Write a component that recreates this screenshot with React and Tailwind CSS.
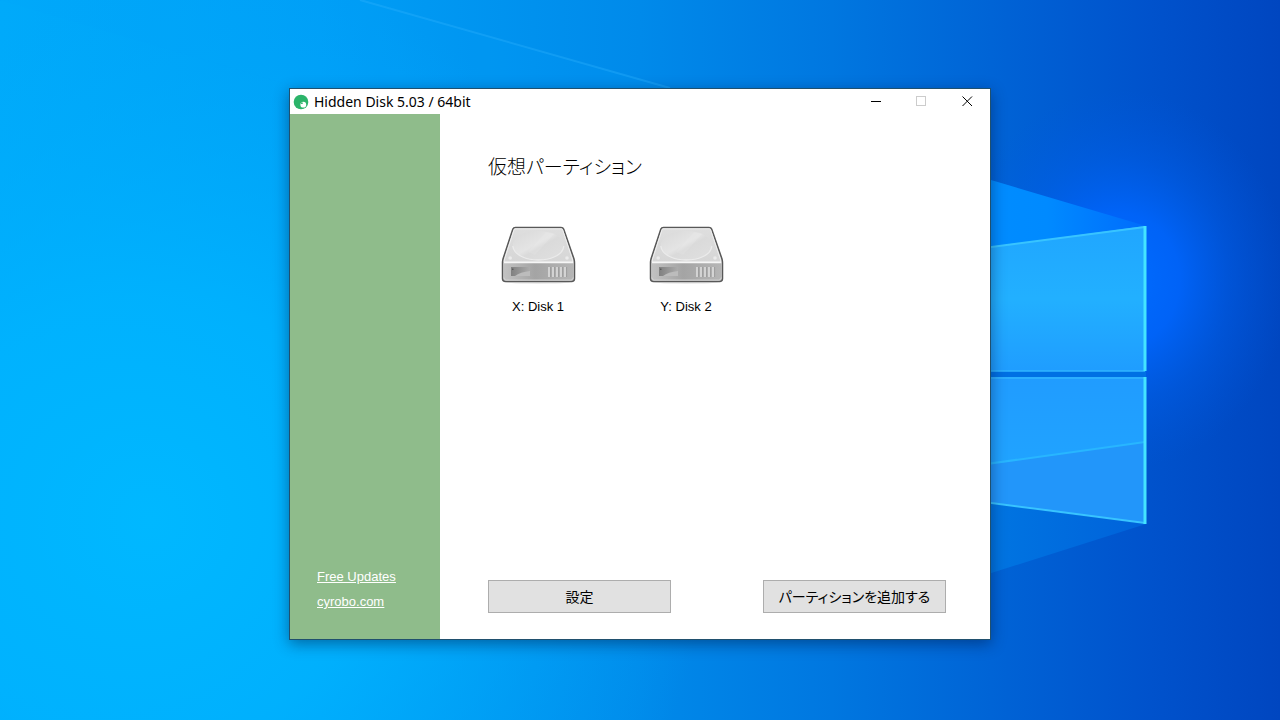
import { useState } from "react";

const disks = [
  { letter: "X", name: "Disk 1" },
  { letter: "Y", name: "Disk 2" },
];

function Wallpaper() {
  return (
    <svg
      className="absolute inset-0 h-full w-full"
      viewBox="0 0 1280 720"
      preserveAspectRatio="xMidYMid slice"
      aria-hidden="true"
    >
      <defs>
        <linearGradient id="sky" x1="0" y1="0" x2="1" y2="0">
          <stop offset="0" stopColor="#00aafa" />
          <stop offset="0.25" stopColor="#009ff6" />
          <stop offset="0.5" stopColor="#008aea" />
          <stop offset="0.65" stopColor="#0077e0" />
          <stop offset="0.8" stopColor="#0060d4" />
          <stop offset="0.9" stopColor="#0052cc" />
          <stop offset="1" stopColor="#0046c0" />
        </linearGradient>
        <radialGradient id="cyan" gradientUnits="userSpaceOnUse" cx="150" cy="520" r="560">
          <stop offset="0" stopColor="#00b8ff" />
          <stop offset="0.4" stopColor="#00b4ff" stopOpacity="0.8" />
          <stop offset="1" stopColor="#00a8fa" stopOpacity="0" />
        </radialGradient>
        <radialGradient
          id="glow"
          gradientUnits="userSpaceOnUse"
          cx="0"
          cy="0"
          r="1"
          gradientTransform="translate(1120 280) scale(170 190)"
        >
          <stop offset="0" stopColor="#006cff" />
          <stop offset="0.35" stopColor="#0066ff" stopOpacity="0.85" />
          <stop offset="0.65" stopColor="#0060f0" stopOpacity="0.4" />
          <stop offset="1" stopColor="#0058e0" stopOpacity="0" />
        </radialGradient>
        <linearGradient id="beamTop" x1="0" y1="0" x2="1" y2="0">
          <stop offset="0" stopColor="#0090ff" />
          <stop offset="0.6" stopColor="#008aff" />
          <stop offset="1" stopColor="#006cfc" />
        </linearGradient>
        <linearGradient id="beamBottom" x1="0" y1="0" x2="1" y2="0">
          <stop offset="0" stopColor="#0080e6" />
          <stop offset="1" stopColor="#0062da" />
        </linearGradient>
        <linearGradient id="paneTop" x1="0" y1="0" x2="0" y2="1">
          <stop offset="0" stopColor="#20a6ff" />
          <stop offset="0.5" stopColor="#22b0ff" />
          <stop offset="1" stopColor="#1f9dff" />
        </linearGradient>
        <linearGradient id="paneBottom" x1="0" y1="0" x2="0" y2="1">
          <stop offset="0" stopColor="#209cff" />
          <stop offset="1" stopColor="#20a4ff" />
        </linearGradient>
      </defs>
      <rect width="1280" height="720" fill="url(#sky)" />
      <rect width="1280" height="720" fill="url(#cyan)" />
      <rect width="1280" height="720" fill="url(#glow)" />

      {/* light beams */}
      <path d="M360 0 L670 88 L300 88 L0 0Z" fill="#00a4ff" opacity="0.12" />
      <path d="M360 0 L670 88" stroke="#30b4ff" strokeWidth="2" opacity="0.35" />
      <path d="M900 153 L1146 226 L900 259Z" fill="url(#beamTop)" />
      <path d="M900 492 L1146 524 L900 602Z" fill="url(#beamBottom)" />

      {/* window panes */}
      <path d="M900 368 H1146 V379 H900Z" fill="#0070e4" />
      <path d="M900 259 L1145 226 V371 H900Z" fill="url(#paneTop)" />
      <path d="M900 377 H1145 V523 L900 491Z" fill="#2296fa" />
      <path d="M900 377 H1145 V442 L900 476Z" fill="url(#paneBottom)" />
      <path d="M900 476 L1145 442" stroke="#28b6ff" strokeWidth="2" />
      <path d="M900 371 H1145 M900 378 H1145" stroke="#30b4ff" strokeWidth="1.5" />
      <path d="M900 259 L1145 227" stroke="#38c4ff" strokeWidth="2" fill="none" />
      <path d="M900 491 L1145 523" stroke="#38c4ff" strokeWidth="2" fill="none" />
      <path d="M1145 226 V371 M1145 377 V524" stroke="#44e4ff" strokeWidth="3" />
    </svg>
  );
}

function AppIcon() {
  return (
    <svg className="h-4 w-4" viewBox="0 0 16 16" aria-hidden="true">
      <circle cx="8" cy="8" r="7.3" fill="#2cb46a" />
      <circle cx="10.3" cy="10.7" r="2.9" fill="#fff" />
      <circle cx="8.9" cy="9.2" r="0.9" fill="#2cb46a" />
    </svg>
  );
}

function DiskIcon() {
  return (
    <svg className="h-[60px] w-[76px]" viewBox="0 0 76 60" aria-hidden="true">
      <defs>
        <linearGradient id="lid" x1="0" y1="0" x2="0" y2="1">
          <stop offset="0" stopColor="#dedede" />
          <stop offset="1" stopColor="#d6d6d6" />
        </linearGradient>
        <linearGradient id="platter" x1="0" y1="0" x2="1" y2="1">
          <stop offset="0" stopColor="#d8d8d8" />
          <stop offset="0.45" stopColor="#e4e4e4" />
          <stop offset="0.55" stopColor="#dadada" />
          <stop offset="1" stopColor="#e0e0e0" />
        </linearGradient>
        <linearGradient id="front" x1="0" y1="0" x2="1" y2="0">
          <stop offset="0" stopColor="#c2c2c2" />
          <stop offset="0.45" stopColor="#a4a4a4" />
          <stop offset="1" stopColor="#b6b6b6" />
        </linearGradient>
        <linearGradient id="slot" x1="0" y1="0" x2="1" y2="0">
          <stop offset="0" stopColor="#808080" />
          <stop offset="1" stopColor="#acacac" />
        </linearGradient>
      </defs>
      <ellipse cx="38" cy="56" rx="32" ry="2" fill="#000" opacity="0.08" />
      <path
        d="M15.5 1.5 H61 Q63 1.5 63.8 3.4 L74 33 Q74.5 35 74.5 37 V52.5 Q74.5 55.5 71.5 55.5 H5.5 Q2.5 55.5 2.5 52.5 V37 Q2.5 35 3 33 L12.7 3.4 Q13.5 1.5 15.5 1.5Z"
        fill="url(#lid)"
        stroke="#585858"
        strokeWidth="1.5"
      />
      <path d="M15 2.8 H61.5 Q62.3 2.8 62.8 4.4 L72.6 34 V36 H4.3 V34 L13.8 4.4 Q14.3 2.8 15 2.8Z" fill="url(#lid)" stroke="#f0f0f0" strokeWidth="0.9" />
      <ellipse cx="38.3" cy="19.5" rx="25.5" ry="14.5" fill="url(#platter)" />
      <path d="M12.8 20 C14 30 28 34 38.3 34 S63 30 63.8 20" fill="none" stroke="#ebebeb" strokeWidth="1.3" />
      <path d="M28 26 L46 6 L54 8 L35 29Z" fill="#fff" opacity="0.1" />
      <circle cx="10.2" cy="32" r="1.8" fill="#ebebeb" />
      <circle cx="67" cy="32" r="1.8" fill="#ebebeb" />
      <path d="M3.6 36.5 H73.4 V51.5 Q73.4 54.3 70.6 54.3 H6.4 Q3.6 54.3 3.6 51.5Z" fill="url(#front)" />
      <path d="M4 51.5 Q4.3 54 6.4 54 H70.6 Q73 54 73.2 51.5" fill="none" stroke="#d4d4d4" strokeWidth="0.8" />
      <path d="M4 36.5 H73.2" stroke="#f6f6f6" strokeWidth="1.4" />
      <rect x="11" y="41" width="19" height="9" fill="url(#slot)" />
      <path d="M15 50 Q20 46 30 45 V50Z" fill="#bcbcbc" />
      <circle cx="12.8" cy="43.2" r="0.8" fill="#505050" />
      <path d="M49 41 V51 M53 41 V51 M57 41 V51 M61 41 V51 M65 41 V51" stroke="#d8d8d8" strokeWidth="1.8" />
      <path d="M50.6 41 V51 M54.6 41 V51 M58.6 41 V51 M62.6 41 V51 M66.6 41 V51" stroke="#989898" strokeWidth="0.8" />
    </svg>
  );
}

function TitleBar() {
  return (
    <header className="flex h-[25px] items-center bg-white pl-[3px]">
      <AppIcon />
      <h1 className="ml-[5px] flex-1 font-['Noto_Sans',sans-serif] text-sm text-black">
        Hidden Disk 5.03 / 64bit
      </h1>
      <div className="flex h-full">
        <button type="button" aria-label="Minimize" className="flex w-[46px] items-center justify-center hover:bg-gray-200">
          <svg className="h-[11px] w-[11px]" viewBox="0 0 11 11" shapeRendering="crispEdges">
            <path d="M1 5.5 H11" stroke="#000" />
          </svg>
        </button>
        <button type="button" aria-label="Maximize" disabled className="flex w-[46px] items-center justify-center">
          <svg className="h-[11px] w-[11px]" viewBox="0 0 11 11" shapeRendering="crispEdges">
            <rect x="0.5" y="0.5" width="9" height="9" fill="none" stroke="#ccc" />
          </svg>
        </button>
        <button type="button" aria-label="Close" className="flex w-[46px] items-center justify-center hover:bg-red-600">
          <svg className="h-[11px] w-[11px]" viewBox="0 0 11 11">
            <path d="M0.5 0.5 L10 10 M10 0.5 L0.5 10" stroke="#000" />
          </svg>
        </button>
      </div>
    </header>
  );
}

export default function App() {
  const [selected, setSelected] = useState(null);

  return (
    <div className="relative flex min-h-screen items-center justify-center pt-2 font-['Liberation_Sans','Noto_Sans_CJK_JP',sans-serif]">
      <Wallpaper />

      <div className="relative flex min-h-[552px] w-full max-w-[702px] flex-col border border-[#20506e] bg-white shadow-[0_4px_14px_rgba(0,20,60,0.45)]">
        <TitleBar />

        <div className="flex flex-1">
          {/* Sidebar */}
          <aside className="flex w-[150px] shrink-0 flex-col justify-end bg-[#8fbc8b] pb-[25px] pl-[27px]">
            <nav className="flex flex-col items-start text-[13px] leading-[25px] text-white underline">
              <a href="#updates">Free Updates</a>
              <a href="#cyrobo">cyrobo.com</a>
            </nav>
          </aside>

          {/* Partitions */}
          <main className="flex flex-1 flex-col pt-10 pr-11 pb-[26px] pl-12 text-black">
            <h2 className="text-[19px] leading-7 font-light [font-feature-settings:'palt']">仮想パーティション</h2>

            <div className="mt-11 flex flex-wrap gap-12">
              {disks.map((disk) => (
                <button
                  key={disk.letter}
                  type="button"
                  aria-pressed={selected === disk.letter}
                  onClick={() => setSelected(disk.letter)}
                  className="flex w-[100px] flex-col items-center gap-3 text-[13px] leading-[18px]"
                >
                  <DiskIcon />
                  <span>{disk.letter}: {disk.name}</span>
                </button>
              ))}
            </div>

            <div className="mt-auto flex justify-between">
              <button type="button" className="h-[33px] w-[183px] border border-[#adadad] bg-[#e1e1e1] text-sm [font-feature-settings:'palt']">
                設定
              </button>
              <button type="button" className="h-[33px] w-[183px] border border-[#adadad] bg-[#e1e1e1] text-sm [font-feature-settings:'palt']">
                パーティションを追加する
              </button>
            </div>
          </main>
        </div>
      </div>
    </div>
  );
}
